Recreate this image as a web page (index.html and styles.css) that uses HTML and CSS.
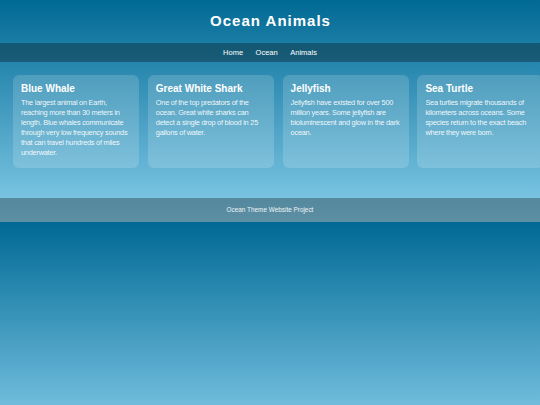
FILE: index.html
```html
<!DOCTYPE html>
<html lang="en">
<head>
<meta charset="utf-8">
<title>Ocean Animals</title>
<link rel="stylesheet" href="styles.css">
</head>
<body>
<header class="site-header">
  <h1 class="site-title">Ocean Animals</h1>
</header>
<nav class="site-nav">
  <a href="#" class="nav-link">Home</a>
  <a href="#" class="nav-link">Ocean</a>
  <a href="#" class="nav-link">Animals</a>
</nav>
<main class="cards">
  <section class="card">
    <h2 class="card-title">Blue Whale</h2>
    <p class="card-text">The largest animal on Earth, reaching more than 30 meters in length. Blue whales communicate through very low frequency sounds that can travel hundreds of miles underwater.</p>
  </section>
  <section class="card">
    <h2 class="card-title">Great White Shark</h2>
    <p class="card-text">One of the top predators of the ocean. Great white sharks can detect a single drop of blood in 25 gallons of water.</p>
  </section>
  <section class="card">
    <h2 class="card-title">Jellyfish</h2>
    <p class="card-text">Jellyfish have existed for over 500 million years. Some jellyfish are bioluminescent and glow in the dark ocean.</p>
  </section>
  <section class="card">
    <h2 class="card-title">Sea Turtle</h2>
    <p class="card-text">Sea turtles migrate thousands of kilometers across oceans. Some species return to the exact beach where they were born.</p>
  </section>
</main>
<footer class="site-footer">
  <p class="footer-text">Ocean Theme Website Project</p>
</footer>
</body>
</html>
```

FILE: styles.css
```css
body {
  margin: 0;
  font-family: "Liberation Sans", Arial, sans-serif;
  color: #fff;
  background: linear-gradient(to bottom, #006994, #87ceeb);
}

.site-header {
  padding: 12px 0 13px;
  text-align: center;
}

.site-title {
  margin: 0;
  font-size: 15px;
  line-height: 18px;
  font-weight: bold;
  letter-spacing: 1px;
  text-indent: 1px;
}

.site-nav {
  display: flex;
  justify-content: center;
  gap: 12.5px;
  padding: 5px 0;
  background: rgba(0, 0, 0, 0.3);
}

.nav-link {
  color: #fff;
  text-decoration: none;
  font-size: 7.5px;
  line-height: 9px;
}

.cards {
  display: flex;
  align-items: stretch;
  gap: 8.8px;
  padding: 13px 13px 29.5px;
  overflow: hidden;
}

.card {
  flex: 0 0 126px;
  box-sizing: border-box;
  padding: 7.5px 7px 10px 8px;
  border-radius: 6px;
  background: rgba(255, 255, 255, 0.16);
}

.card-title {
  margin: 0 0 3.5px;
  font-size: 10px;
  line-height: 12px;
  font-weight: bold;
}

.card-text {
  margin: 0;
  font-size: 7.4px;
  line-height: 10px;
  letter-spacing: -0.25px;
  color: rgba(255, 255, 255, 0.92);
}

.site-footer {
  padding: 8px 0;
  text-align: center;
  background: rgba(0, 0, 0, 0.3);
}

.footer-text {
  margin: 0;
  font-size: 6.4px;
  line-height: 8px;
  color: #eef4f7;
}
```
